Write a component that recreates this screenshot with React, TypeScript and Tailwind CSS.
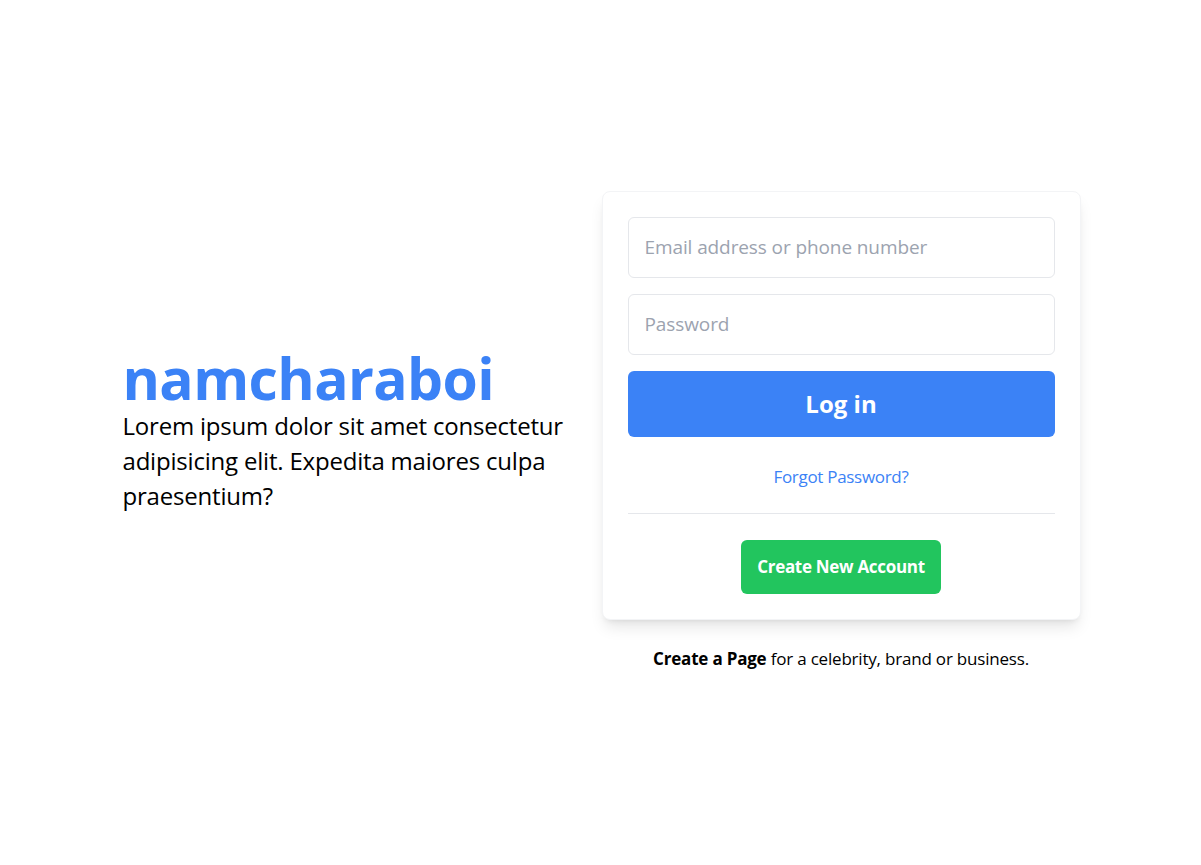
import React from "react";

export default function App() {
  return (
    <div
      className="min-h-screen bg-white flex items-center justify-center"
      style={{ fontFamily: '"Open Sans", "Noto Sans", sans-serif' }}
    >
      <div className="w-[960px] flex items-center justify-between">
        {/* Brand */}
        <div className="w-[460px] pl-[2px] -mt-[4px]">
          <h1 className="text-[57px] leading-[60px] font-bold text-[#3b82f6] tracking-[-0.6px]">
            namcharaboi
          </h1>
          <p className="text-[24px] leading-[35px] text-black tracking-[-0.2px]">
            Lorem ipsum dolor sit amet consectetur adipisicing elit. Expedita maiores culpa praesentium?
          </p>
        </div>

        {/* Login card */}
        <div className="w-[479px] mb-[4px]">
          <div className="bg-white border border-gray-100 rounded-lg shadow-lg p-[25px]">
            <form className="flex flex-col gap-4" onSubmit={(e) => e.preventDefault()}>
              <input
                type="text"
                placeholder="Email address or phone number"
                className="w-full h-[61px] px-4 text-[19px] tracking-[-0.1px] border border-[#e5e7eb] rounded-md outline-none placeholder:text-[#9ca3af]"
              />
              <input
                type="password"
                placeholder="Password"
                className="w-full h-[61px] px-4 text-[19px] tracking-[-0.1px] border border-[#e5e7eb] rounded-md outline-none placeholder:text-[#9ca3af]"
              />
              <button
                type="submit"
                className="w-full h-[66px] bg-[#3b82f6] text-white text-[24px] font-bold rounded-md"
              >
                Log in
              </button>
            </form>

            <div className="text-center mt-[26px]">
              <a href="#" className="text-[17px] leading-[28px] tracking-[-0.3px] text-[#3b82f6]">
                Forgot Password?
              </a>
            </div>

            <hr className="border-[#e5e7eb] mt-[22px]" />

            <div className="flex justify-center mt-[26px]">
              <button className="h-[54px] px-4 bg-[#22c55e] text-white text-[17px] tracking-[-0.3px] font-bold rounded-md">
                Create New Account
              </button>
            </div>
          </div>

          <p className="text-center text-[17px] leading-[24px] tracking-[-0.2px] mt-[27px] text-black">
            <span className="font-bold">Create a Page</span> for a celebrity, brand or business.
          </p>
        </div>
      </div>
    </div>
  );
}
